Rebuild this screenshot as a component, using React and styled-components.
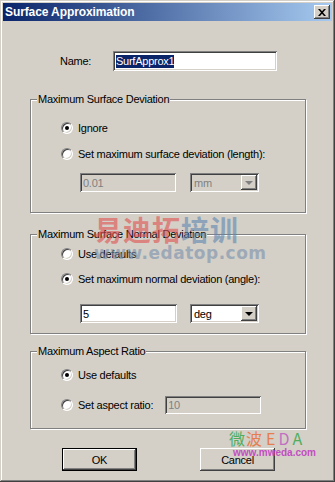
import React from 'react';
import styled, { createGlobalStyle } from 'styled-components';

const GlobalStyle = createGlobalStyle`
  html, body { margin: 0; padding: 0; background: #d4d0c8; }
  body { font-family: "Liberation Sans", Arial, sans-serif; font-size: 11px; color: #000; letter-spacing: -0.25px; }
`;

const Window = styled.div`
  position: relative;
  width: 335px;
  height: 482px;
  box-sizing: border-box;
  padding: 3px;
  background: #d4d0c8;
  box-shadow: inset -1px -1px 0 #404040, inset 1px 1px 0 #d4d0c8,
    inset -2px -2px 0 #808080, inset 2px 2px 0 #fff;
  overflow: hidden;
`;

const TitleBar = styled.div`
  height: 18px;
  display: flex;
  align-items: center;
  justify-content: space-between;
  padding: 0 2px 0 2px;
  background: linear-gradient(to right, #0a246a, #a6caf0);
`;

const Title = styled.span`
  color: #fff;
  font-weight: bold;
  font-size: 12px;
  letter-spacing: -0.1px;
`;

const CloseButton = styled.div`
  width: 16px;
  height: 14px;
  box-sizing: border-box;
  background: #d4d0c8;
  display: flex;
  align-items: center;
  justify-content: center;
  box-shadow: inset -1px -1px 0 #404040, inset 1px 1px 0 #fff,
    inset -2px -2px 0 #808080;
`;

const Content = styled.div`
  padding-left: 27px;
`;

const NameRow = styled.div`
  display: flex;
  align-items: center;
  margin-top: 30px;
  margin-left: 30px;
  height: 20px;
`;

const Label = styled.span`
  width: 53px;
`;

const TextBox = styled.div`
  width: ${p => p.$width}px;
  height: ${p => p.$height || 19}px;
  box-sizing: border-box;
  display: flex;
  align-items: center;
  padding-left: 3px;
  margin-left: ${p => p.$offset || 0}px;
  background: ${p => (p.$disabled ? '#d4d0c8' : '#fff')};
  color: ${p => (p.$disabled ? '#808080' : '#000')};
  box-shadow: inset 1px 1px 0 #808080, inset -1px -1px 0 #fff,
    inset 2px 2px 0 #404040, inset -2px -2px 0 #d4d0c8;
`;

const Selected = styled.span`
  background: #0a246a;
  color: #fff;
  line-height: 13px;
`;

const Group = styled.fieldset`
  width: 276px;
  box-sizing: border-box;
  margin: ${p => p.$top}px 0 0 0;
  padding: 0 0 ${p => p.$bottom}px 0;
  border: 1px solid #808080;
  box-shadow: 1px 1px 0 #fff, inset 1px 1px 0 #fff;
`;

const Legend = styled.legend`
  margin-left: 6px;
  padding: 0 1px;
  line-height: 14px;
  background: #d4d0c8;
`;

const Row = styled.div`
  display: flex;
  align-items: center;
  height: ${p => p.$height || 16}px;
  margin-top: ${p => p.$gap}px;
  margin-left: ${p => p.$indent || 30}px;
  gap: ${p => p.$spacing || 5}px;
`;

const RadioDot = styled.span`
  width: 12px;
  height: 12px;
  box-sizing: border-box;
  border-radius: 50%;
  border: 1px solid;
  border-color: #808080 #fff #fff #808080;
  background: #fff;
  box-shadow: inset 1px 1px 0 #404040, inset -1px -1px 0 #d4d0c8;
  display: flex;
  align-items: center;
  justify-content: center;
  flex: none;
  &::after {
    content: '';
    width: 4px;
    height: 4px;
    border-radius: 50%;
    background: ${p => (p.$checked ? '#000' : 'transparent')};
  }
`;

const RadioText = styled.span`
  white-space: nowrap;
`;

const Combo = styled.div`
  width: 69px;
  height: 19px;
  box-sizing: border-box;
  display: flex;
  align-items: center;
  justify-content: space-between;
  padding: 2px 2px 2px 4px;
  background: ${p => (p.$disabled ? '#d4d0c8' : '#fff')};
  color: ${p => (p.$disabled ? '#808080' : '#000')};
  box-shadow: inset 1px 1px 0 #808080, inset -1px -1px 0 #fff,
    inset 2px 2px 0 #404040, inset -2px -2px 0 #d4d0c8;
`;

const ComboArrow = styled.div`
  width: 16px;
  height: 15px;
  box-sizing: border-box;
  background: #d4d0c8;
  display: flex;
  align-items: center;
  justify-content: center;
  box-shadow: inset -1px -1px 0 #404040, inset 1px 1px 0 #fff,
    inset -2px -2px 0 #808080;
  &::after {
    content: '';
    border-left: 4px solid transparent;
    border-right: 4px solid transparent;
    border-top: 4px solid ${p => (p.$disabled ? '#808080' : '#000')};
    margin-top: 1px;
  }
`;

const ButtonRow = styled.div`
  display: flex;
  gap: 63px;
  margin-top: 19px;
  margin-left: 32px;
`;

const Button = styled.div`
  width: 75px;
  height: 23px;
  box-sizing: border-box;
  display: flex;
  align-items: center;
  justify-content: center;
  background: #d4d0c8;
  box-shadow: ${p =>
    p.$default
      ? 'inset 0 0 0 1px #000, inset -2px -2px 0 #404040, inset 2px 2px 0 #fff, inset -3px -3px 0 #808080'
      : 'inset -1px -1px 0 #404040, inset 1px 1px 0 #fff, inset -2px -2px 0 #808080'};
`;

const Watermark = styled.div`
  position: absolute;
  left: ${p => p.$x}px;
  top: ${p => p.$y}px;
  white-space: nowrap;
  pointer-events: none;
  font-weight: bold;
  letter-spacing: 0;
`;

const BigMark = styled.span`
  font-family: "Noto Sans CJK SC", sans-serif;
  font-size: 28px;
  line-height: 30px;
  letter-spacing: 1px;
  color: ${p => p.$color};
  opacity: 0.6;
`;

const UrlMark = styled.div`
  font-family: ${p => p.$font || '"DejaVu Sans"'}, sans-serif;
  font-size: ${p => p.$size}px;
  line-height: ${p => p.$size + 1}px;
  color: ${p => p.$color};
  opacity: ${p => p.$opacity || 0.6};
  letter-spacing: ${p => p.$spacing || 0}px;
  margin-left: ${p => p.$indent || 0}px;
`;

const EdaMark = styled.span`
  font-family: "Noto Sans CJK SC", "DejaVu Sans", sans-serif;
  font-size: 16px;
  font-weight: normal;
  line-height: 18px;
  color: ${p => p.$color};
  margin-right: ${p => p.$space || 0}px;
  opacity: 0.85;
`;

const Radio = ({ checked, children }) => (
  <>
    <RadioDot $checked={checked} />
    <RadioText>{children}</RadioText>
  </>
);

export default function App() {
  return (
    <>
      <GlobalStyle />
      <Window>
        <TitleBar>
          <Title>Surface Approximation</Title>
          <CloseButton>
            <svg width="8" height="7" viewBox="0 0 8 7">
              <path d="M0 0 L2 0 L4 2.3 L6 0 L8 0 L5 3.5 L8 7 L6 7 L4 4.7 L2 7 L0 7 L3 3.5 Z" fill="#000" />
            </svg>
          </CloseButton>
        </TitleBar>
        <Content>
          <NameRow>
            <Label>Name:</Label>
            <TextBox $width={164} $height={20}>
              <Selected>SurfApprox1</Selected>
            </TextBox>
          </NameRow>

          <Group $top={21} $bottom={20}>
            <Legend>Maximum Surface Deviation</Legend>
            <Row $gap={14}>
              <Radio checked>Ignore</Radio>
            </Row>
            <Row $gap={10}>
              <Radio>Set maximum surface deviation (length):</Radio>
            </Row>
            <Row $gap={11} $height={19} $indent={49} $spacing={14}>
              <TextBox $width={96} $disabled>0.01</TextBox>
              <Combo $disabled>
                mm
                <ComboArrow $disabled />
              </Combo>
            </Row>
          </Group>

          <Group $top={14} $bottom={10}>
            <Legend>Maximum Surface Normal Deviation</Legend>
            <Row $gap={5}>
              <Radio>Use defaults</Radio>
            </Row>
            <Row $gap={9}>
              <Radio checked>Set maximum normal deviation (angle):</Radio>
            </Row>
            <Row $gap={17} $height={19} $indent={49} $spacing={13}>
              <TextBox $width={97}>5</TextBox>
              <Combo>
                deg
                <ComboArrow />
              </Combo>
            </Row>
          </Group>

          <Group $top={10} $bottom={14}>
            <Legend>Maximum Aspect Ratio</Legend>
            <Row $gap={9}>
              <Radio checked>Use defaults</Radio>
            </Row>
            <Row $gap={13} $height={18}>
              <Radio>Set aspect ratio:</Radio>
              <TextBox $width={96} $height={18} $disabled $offset={7}>
                10
              </TextBox>
            </Row>
          </Group>

          <ButtonRow>
            <Button $default>OK</Button>
            <Button>Cancel</Button>
          </ButtonRow>
        </Content>

        <Watermark $x={94} $y={214}>
          <BigMark $color="#e05050">易迪拓</BigMark>
          <BigMark $color="#5f86b0">培训</BigMark>
          <UrlMark $size={17} $color="#7a90ac" $spacing={0.5}>www.edatop.com</UrlMark>
        </Watermark>

        <Watermark $x={229} $y={429}>
          <EdaMark $color="#3aa84a" $space={1}>微</EdaMark>
          <EdaMark $color="#e8703a" $space={4}>波</EdaMark>
          <EdaMark $color="#e8703a" $space={3}>E</EdaMark>
          <EdaMark $color="#c060c0" $space={3}>D</EdaMark>
          <EdaMark $color="#3aa84a">A</EdaMark>
          <UrlMark $size={10} $font='"Liberation Sans"' $color="#c040c0" $opacity={0.9} $indent={4}>
            www.mweda.com
          </UrlMark>
        </Watermark>
      </Window>
    </>
  );
}
